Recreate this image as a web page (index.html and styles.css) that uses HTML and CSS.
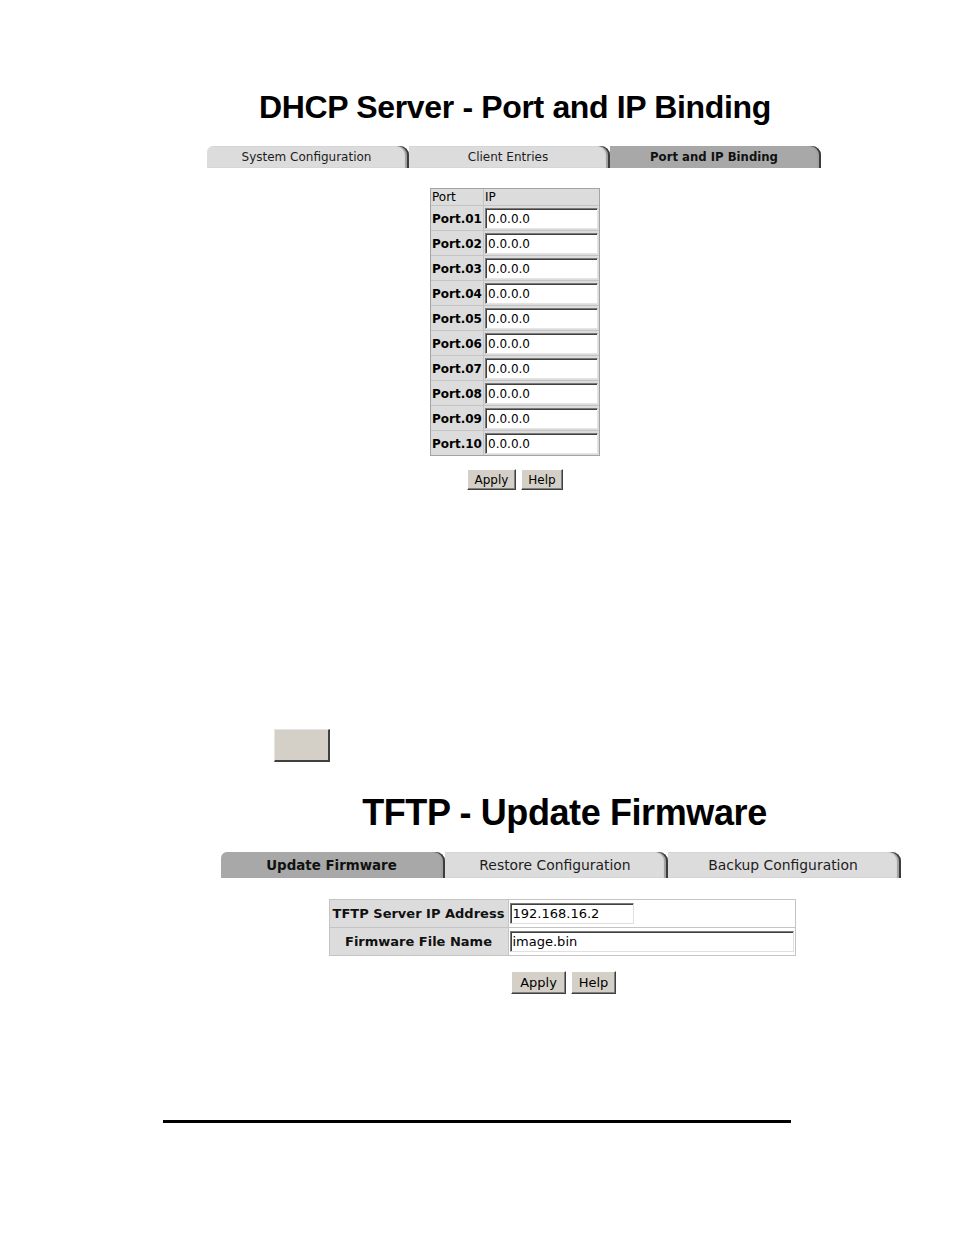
FILE: index.html
```html
<!DOCTYPE html>
<html>
<head>
<meta charset="utf-8">
<title>DHCP Server - Port and IP Binding</title>
<link rel="stylesheet" href="styles.css">
</head>
<body>
<div class="page">
  <section class="sec1">
    <h1 class="title title1">DHCP Server - Port and IP Binding</h1>
    <div class="tabs tabs1">
      <div class="tab first w1a">System Configuration</div>
      <div class="tab w1b">Client Entries</div>
      <div class="tab active w1c">Port and IP Binding</div>
    </div>
    <table class="grid">
      <tr class="head"><td class="pc">Port</td><td class="ic">IP</td></tr>
      <tr><td class="pc b">Port.01</td><td class="ic"><input class="ip" value="0.0.0.0"></td></tr>
      <tr><td class="pc b">Port.02</td><td class="ic"><input class="ip" value="0.0.0.0"></td></tr>
      <tr><td class="pc b">Port.03</td><td class="ic"><input class="ip" value="0.0.0.0"></td></tr>
      <tr><td class="pc b">Port.04</td><td class="ic"><input class="ip" value="0.0.0.0"></td></tr>
      <tr><td class="pc b">Port.05</td><td class="ic"><input class="ip" value="0.0.0.0"></td></tr>
      <tr><td class="pc b">Port.06</td><td class="ic"><input class="ip" value="0.0.0.0"></td></tr>
      <tr><td class="pc b">Port.07</td><td class="ic"><input class="ip" value="0.0.0.0"></td></tr>
      <tr><td class="pc b">Port.08</td><td class="ic"><input class="ip" value="0.0.0.0"></td></tr>
      <tr><td class="pc b">Port.09</td><td class="ic"><input class="ip" value="0.0.0.0"></td></tr>
      <tr><td class="pc b">Port.10</td><td class="ic"><input class="ip" value="0.0.0.0"></td></tr>
    </table>
    <div class="btns btns1">
      <button class="btn b-apply1">Apply</button>
      <button class="btn b-help1">Help</button>
    </div>
  </section>

  <div class="blank-btn"></div>

  <section class="sec2">
    <h1 class="title title2">TFTP - Update Firmware</h1>
    <div class="tabs tabs2">
      <div class="tab first active w2a">Update Firmware</div>
      <div class="tab w2b">Restore Configuration</div>
      <div class="tab w2c">Backup Configuration</div>
    </div>
    <table class="form">
      <tr><td class="lbl">TFTP Server IP Address</td><td class="val"><input class="fin fin1" value="192.168.16.2"></td></tr>
      <tr><td class="lbl">Firmware File Name</td><td class="val"><input class="fin fin2" value="image.bin"></td></tr>
    </table>
    <div class="btns btns2">
      <button class="btn big b-apply2">Apply</button>
      <button class="btn big b-help2">Help</button>
    </div>
  </section>

  <div class="rule"></div>
</div>
</body>
</html>
```

FILE: styles.css
```css
html, body {
  margin: 0;
  padding: 0;
  background: #ffffff;
}
body {
  font-family: "DejaVu Sans", Verdana, sans-serif;
  color: #000;
}
.page {
  width: 954px;
  padding-top: 90px;
  padding-bottom: 110px;
}
.title {
  margin: 0;
  font-family: "Liberation Sans", Arial, sans-serif;
  font-weight: bold;
  text-align: center;
  color: #000;
}
.title1 {
  font-size: 32px;
  line-height: 35px;
  letter-spacing: -0.35px;
}
.title2 {
  font-size: 36px;
  line-height: 41px;
  letter-spacing: -0.4px;
  padding-left: 5px;
}
.sec1 {
  margin-left: 207px;
  width: 616px;
}
.sec2 {
  margin-left: 221px;
  width: 682px;
  margin-top: 30px;
}
.tabs {
  display: flex;
}
.tabs1 {
  margin-top: 21px;
}
.tabs2 {
  margin-top: 19px;
}
.tab {
  display: flex;
  align-items: center;
  justify-content: center;
  background: #dcdcdc;
  color: #1c1c1c;
  border-top-right-radius: 9px;
  box-shadow: inset -2px 0 0 #3c3c3c, inset -4px 0 1px #a0a0a0;
  box-sizing: border-box;
  padding-right: 3px;
}
.tab.first {
  border-top-left-radius: 6px;
}
.tab.active {
  background: #a8a8a8;
  font-weight: bold;
  color: #111;
}
.tabs1 .tab {
  height: 22px;
  font-size: 12px;
}
.tabs1 .tab.active { font-size: 11.7px; }
.tabs2 .tab {
  height: 26px;
  font-size: 13.9px;
}
.tabs2 .tab.active { font-size: 13.4px; }
.w1a { width: 202px; }
.w1b { width: 201px; }
.w1c { width: 211px; }
.w2a { width: 224px; }
.w2b { width: 223px; }
.w2c { width: 233px; }

/* port table */
.grid {
  margin: 20px auto 0;
  border-collapse: separate;
  border-spacing: 0;
  border: 1px solid #a4a4a4;
  background: #dcdcdc;
  font-size: 12px;
  width: 170px;
}
.grid td {
  padding: 2px 1px 1px 1px;
  border-top: 1px solid #c4c4c4;
  vertical-align: middle;
  white-space: nowrap;
}
.grid tr.head td {
  border-top: none;
  padding: 0 1px;
  height: 16px;
  line-height: 16px;
}
.grid td.pc {
  width: 51px;
}
.grid td.ic {
  border-left: 1px solid #c4c4c4;
}
.grid td.b {
  font-weight: bold;
}
.ip {
  display: block;
  box-sizing: border-box;
  width: 113px;
  height: 21px;
  margin: 0;
  padding: 0 2px;
  font-family: "DejaVu Sans", Verdana, sans-serif;
  font-size: 12px;
  color: #000;
  background: #fff;
  border: 1px solid;
  border-color: #7a7a7a #e4e4e4 #e4e4e4 #7a7a7a;
  box-shadow: inset 1px 1px 0 #404040;
  outline: none;
}

/* buttons */
.btns {
  display: flex;
  justify-content: center;
  gap: 5px;
}
.btns1 {
  margin-top: 13px;
}
.btns2 {
  margin-top: 15px;
  padding-left: 3px;
}
.btn {
  margin: 0;
  box-sizing: border-box;
  height: 21px;
  padding: 0 6px;
  font-family: "DejaVu Sans", Verdana, sans-serif;
  font-size: 12px;
  color: #000;
  background: #d4d0c8;
  border: 1px solid;
  border-color: #ffffff #404040 #404040 #ffffff;
  box-shadow: inset -1px -1px 0 #808080;
  border-radius: 0;
}
.b-apply1 { width: 49px; }
.b-help1 { width: 42px; }
.btn.big {
  height: 23px;
  font-size: 13px;
}
.b-apply2 { width: 55px; }
.b-help2 { width: 45px; }

.blank-btn {
  margin-top: 239px;
  margin-left: 274px;
  width: 56px;
  height: 33px;
  box-sizing: border-box;
  background: #d4d0c8;
  border-right: 2px solid #404040;
  border-bottom: 2px solid #404040;
  border-top: 1px solid #e8e6e0;
  border-left: 1px solid #e8e6e0;
}

/* firmware form */
.form {
  margin: 21px auto 0;
  border-collapse: collapse;
  border: 1px solid #c4c4c4;
  width: 467px;
  font-size: 13px;
}
.form td {
  height: 27px;
  padding: 0 1px;
  border-top: 1px solid #c4c4c4;
  border-bottom: 1px solid #c4c4c4;
}
.form td.lbl {
  width: 176px;
  background: #dcdcdc;
  font-weight: bold;
  text-align: center;
  white-space: nowrap;
  border-right: 1px solid #c4c4c4;
  color: #111;
}
.form td.val {
  background: #fff;
  padding-left: 1px;
}
.fin {
  display: block;
  box-sizing: border-box;
  height: 21px;
  margin: 0;
  padding: 0 2px;
  font-family: "DejaVu Sans", Verdana, sans-serif;
  font-size: 13px;
  color: #000;
  background: #fff;
  border: 1px solid;
  border-color: #7a7a7a #e0e0e0 #e0e0e0 #7a7a7a;
  box-shadow: inset 1px 1px 0 #404040;
  outline: none;
}
.fin1 { width: 124px; }
.fin2 { width: 284px; }

.rule {
  margin-top: 126px;
  margin-left: 163px;
  width: 628px;
  height: 3px;
  background: #000;
}
```
